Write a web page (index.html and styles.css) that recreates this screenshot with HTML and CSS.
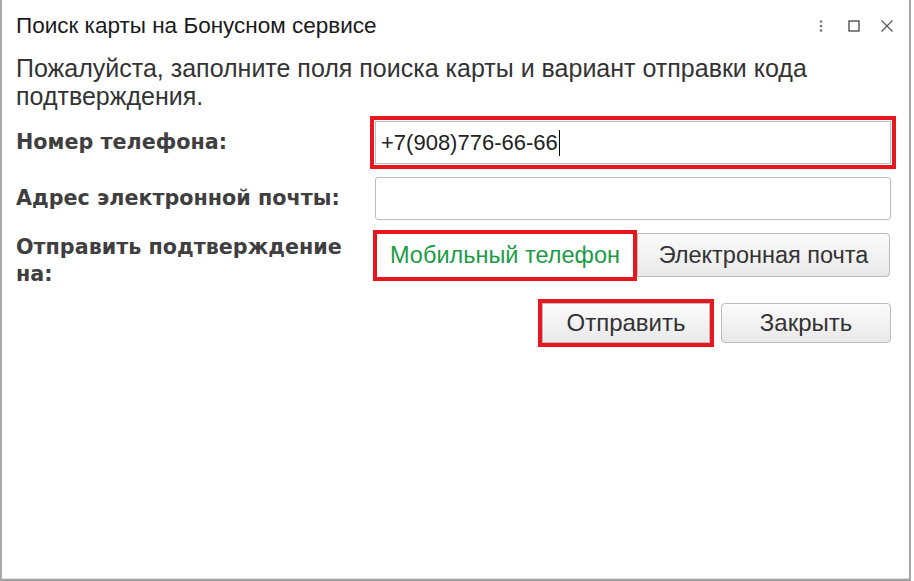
FILE: index.html
```html
<!DOCTYPE html>
<html lang="ru">
<head>
  <meta charset="UTF-8" />
  <title>Поиск карты на Бонусном сервисе</title>
  <link rel="stylesheet" href="styles.css">
</head>
<body>

  <div class="window">

    <!-- Title bar -->
    <div class="titlebar">
      <span class="title">Поиск карты на Бонусном сервисе</span>
      <div class="controls">
        <svg width="14" height="14" viewBox="0 0 14 14">
          <circle cx="7" cy="2.5" r="1.3" fill="#777" />
          <circle cx="7" cy="7" r="1.3" fill="#777" />
          <circle cx="7" cy="11.5" r="1.3" fill="#777" />
        </svg>
        <svg width="14" height="14" viewBox="0 0 14 14">
          <rect x="2" y="2" width="10" height="10" fill="none" stroke="#444" stroke-width="1.3" />
        </svg>
        <svg width="14" height="14" viewBox="0 0 14 14">
          <path d="M1.5 1.5 L12.5 12.5 M12.5 1.5 L1.5 12.5" stroke="#555" stroke-width="1.2" />
        </svg>
      </div>
    </div>

    <div class="content">
      <p class="hint">Пожалуйста, заполните поля поиска карты и вариант отправки кода подтверждения.</p>

      <div class="form">
        <div class="label">Номер телефона:</div>
        <div class="input marked">+7(908)776-66-66<span class="caret"></span></div>

        <div class="label">Адрес электронной почты:</div>
        <div class="input"></div>

        <div class="label top">Отправить подтверждение на:</div>
        <div class="toggle">
          <button class="opt active marked">Мобильный телефон</button>
          <button class="opt">Электронная почта</button>
        </div>
      </div>

      <div class="actions">
        <button class="btn marked">Отправить</button>
        <button class="btn">Закрыть</button>
      </div>
    </div>

  </div>

</body>
</html>
```

FILE: styles.css
```css
body {
  margin: 0;
  background: #fff;
  font-family: 'Liberation Sans', Arial, sans-serif;
}

.window {
  width: 911px;
  height: 581px;
  box-sizing: border-box;
  border-left: 2px solid #a8a8a8;
  border-right: 2px solid #a8a8a8;
  border-bottom: 2px solid #a0a0a0;
  box-shadow: inset 0 -1px 0 #e2e2e2;
  background: #fff;
}

.titlebar {
  display: flex;
  align-items: center;
  justify-content: space-between;
  height: 52px;
  padding: 0 15px 0 14px;
}

.title {
  font-size: 22.5px;
  color: #1a1a1a;
}

.controls {
  display: flex;
  gap: 19px;
  align-items: center;
}

.content {
  padding: 0 18px 0 14px;
}

.hint {
  margin: 2px 0 0;
  font-size: 25px;
  line-height: 28px;
  color: #333;
  max-width: 840px;
}

.form {
  display: grid;
  grid-template-columns: 359px 1fr;
  row-gap: 13px;
  margin-top: 11px;
  align-items: center;
}

.label {
  font-family: 'DejaVu Sans', sans-serif;
  font-weight: bold;
  font-size: 20.7px;
  line-height: 27px;
  color: #3f3f3f;
}

.label.top {
  align-self: start;
  width: 340px;
  margin-top: 1px;
}

.input {
  height: 43px;
  box-sizing: border-box;
  border: 1px solid #bdbdbd;
  border-radius: 3px;
  background: #fff;
  padding: 0 5px;
  display: flex;
  align-items: center;
  font-size: 22px;
  color: #222;
}

.caret {
  display: inline-block;
  width: 1px;
  height: 26px;
  background: #000;
  margin-left: 1px;
}

.marked {
  outline: 4px solid #e8161f;
  outline-offset: 0;
}

.input.marked {
  outline-offset: 1px;
  border-radius: 0;
}

.toggle {
  display: flex;
  align-self: start;
  gap: 4px;
  padding-left: 2px;
}

.opt, .btn {
  font-family: 'Liberation Sans', Arial, sans-serif;
  font-size: 24px;
  color: #333;
  border: 1px solid #bcbcbc;
  background: linear-gradient(to bottom, #fbfbfb, #e9e9e9);
  cursor: pointer;
  padding: 0;
}

.opt {
  font-size: 23.5px;
  height: 44px;
  width: 253px;
  border-radius: 0 4px 4px 0;
}

.opt.active {
  width: 256px;
  height: 43px;
  border: none;
  border-radius: 0;
  background: #fff;
  color: #1b9c45;
  margin-top: 1px;
}

.actions {
  display: flex;
  justify-content: flex-end;
  gap: 11px;
  margin-top: 15px;
}

.btn {
  height: 40px;
  width: 170px;
  border-radius: 4px;
}

.btn.marked {
  width: 168px;
  border-radius: 0;
}
```
